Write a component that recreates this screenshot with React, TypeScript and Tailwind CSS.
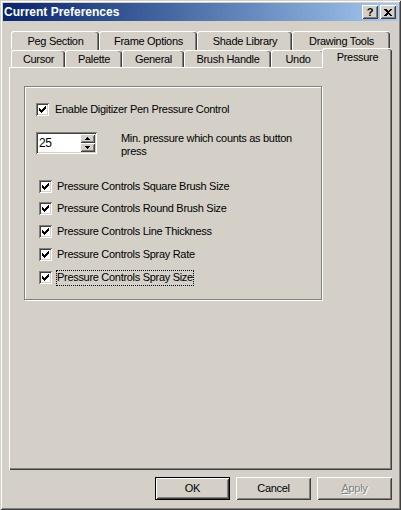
import React from "react";

const face = "bg-[#d4d0c8]";
const raised =
  "shadow-[inset_1px_1px_0_#fff,inset_-1px_-1px_0_#404040,inset_2px_2px_0_#d4d0c8,inset_-2px_-2px_0_#808080]";
const sunken =
  "shadow-[inset_1px_1px_0_#808080,inset_-1px_-1px_0_#fff,inset_2px_2px_0_#404040,inset_-2px_-2px_0_#d4d0c8]";

const checkPixels = [
  [6, 0],
  [5, 1], [6, 1],
  [0, 2], [4, 2], [5, 2], [6, 2],
  [0, 3], [1, 3], [3, 3], [4, 3], [5, 3],
  [0, 4], [1, 4], [2, 4], [3, 4], [4, 4],
  [1, 5], [2, 5], [3, 5],
  [2, 6],
];

const CheckBox = () => (
  <div className={`relative h-[13px] w-[13px] shrink-0 bg-white ${sunken}`}>
    <svg className="absolute left-[3px] top-[3px]" width="7" height="7" viewBox="0 0 7 7" shapeRendering="crispEdges">
      {checkPixels.map(([x, y]) => (
        <rect key={`${x}-${y}`} x={x} y={y} width="1" height="1" fill="#000" />
      ))}
    </svg>
  </div>
);

const Arrow = ({ up }: { up: boolean }) => (
  <svg width="5" height="3" viewBox="0 0 5 3" shapeRendering="crispEdges">
    {up ? (
      <>
        <rect x="2" y="0" width="1" height="1" fill="#000" />
        <rect x="1" y="1" width="3" height="1" fill="#000" />
        <rect x="0" y="2" width="5" height="1" fill="#000" />
      </>
    ) : (
      <>
        <rect x="0" y="0" width="5" height="1" fill="#000" />
        <rect x="1" y="1" width="3" height="1" fill="#000" />
        <rect x="2" y="2" width="1" height="1" fill="#000" />
      </>
    )}
  </svg>
);

const backTabs = [
  { label: "Peg Section", w: "w-[88px]" },
  { label: "Frame Options", w: "w-[98px]" },
  { label: "Shade Library", w: "w-[95px]" },
  { label: "Drawing Tools", w: "w-[98px]" },
];

const frontTabs = [
  { label: "Cursor", w: "w-[54px]" },
  { label: "Palette", w: "w-[57px]" },
  { label: "General", w: "w-[62px]" },
  { label: "Brush Handle", w: "w-[87px]" },
  { label: "Undo", w: "w-[53px]" },
];

const options = [
  "Pressure Controls Square Brush Size",
  "Pressure Controls Round Brush Size",
  "Pressure Controls Line Thickness",
  "Pressure Controls Spray Rate",
  "Pressure Controls Spray Size",
];
const rowGaps = ["mt-0", "mt-[9px]", "mt-[10px]", "mt-[10px]", "mt-[10px]"];

const tabBase =
  "flex items-center justify-center rounded-t-[3px] border-l border-t border-white shadow-[inset_-1px_0_0_#404040,inset_-2px_0_0_#808080]";

export default function App() {
  return (
    <div
      className={`flex h-[510px] w-[401px] flex-col ${face} p-[3px] text-[11px] tracking-[-0.3px] text-black shadow-[inset_1px_1px_0_#d4d0c8,inset_-1px_-1px_0_#404040,inset_2px_2px_0_#fff,inset_-2px_-2px_0_#808080]`}
      style={{ fontFamily: '"Liberation Sans", Arial, sans-serif' }}
    >
      {/* title bar */}
      <div className="flex h-[18px] items-center bg-linear-to-r from-[#0a246a] to-[#a6caf0] pl-[1px] pr-[2px]">
        <span className="text-[12px] font-bold tracking-normal text-white">Current Preferences</span>
        <div className="ml-auto flex gap-[2px]">
          <div className={`flex h-[14px] w-[16px] items-center justify-center ${face} ${raised} text-[11px] font-bold leading-none tracking-normal`}>
            ?
          </div>
          <div className={`flex h-[14px] w-[16px] items-center justify-center ${face} ${raised}`}>
            <svg width="8" height="7" viewBox="0 0 8 7" shapeRendering="crispEdges">
              <path d="M0 0h2l2 2 2-2h2L5 3.5 8 7H6L4 5 2 7H0l3-3.5z" fill="#000" />
            </svg>
          </div>
        </div>
      </div>

      <div className="mt-[10px] flex flex-col px-[6px]">
        {/* back row */}
        <div className="flex h-[19px] pl-[2px]">
          {backTabs.map((t) => (
            <div key={t.label} className={`${tabBase} ${t.w} h-[19px]`}>
              {t.label}
            </div>
          ))}
        </div>
        {/* front row */}
        <div className="flex h-[17px] items-start pl-[2px]">
          {frontTabs.map((t) => (
            <div key={t.label} className={`${tabBase} ${t.w} h-[17px]`}>
              {t.label}
            </div>
          ))}
          <div className={`relative z-10 -ml-[2px] -mt-[2px] h-[20px] w-[70px] ${face} ${tabBase} pb-[2px]`}>
            Pressure
          </div>
        </div>

        {/* page */}
        <div className="h-[403px] pl-[15px] pt-[19px] shadow-[inset_1px_1px_0_#fff,inset_-1px_-1px_0_#404040,inset_-2px_-2px_0_#808080]">
          <div className="h-[214px] w-[298px] border border-[#808080] pl-[11px] pt-[16px] shadow-[inset_1px_1px_0_#fff,1px_1px_0_#fff]">
            <div className="flex h-[13px] items-center gap-[6px]">
              <CheckBox />
              <span>Enable Digitizer Pen Pressure Control</span>
            </div>

            <div className="mt-[16px] flex h-[26px] items-start">
              <div className={`flex h-[22px] w-[61px] items-center bg-white p-[2px] ${sunken}`}>
                <span className="flex-1 pl-[1px] text-[12px]">25</span>
                <div className="flex h-[18px] w-[15px] flex-col">
                  <div className={`flex h-[9px] items-center justify-center ${face} ${raised}`}>
                    <Arrow up />
                  </div>
                  <div className={`flex h-[9px] items-center justify-center ${face} ${raised}`}>
                    <Arrow up={false} />
                  </div>
                </div>
              </div>
              <p className="ml-[24px] w-[185px] leading-[13px]">
                Min. pressure which counts as button press
              </p>
            </div>

            <div className="mt-[22px] flex flex-col pl-[3px]">
              {options.map((o, i) => (
                <div key={o} className={`flex h-[13px] items-center gap-[4px] ${rowGaps[i]}`}>
                  <CheckBox />
                  <span
                    className={`flex h-[16px] items-center border ${
                      i === options.length - 1 ? "border-dotted border-black" : "border-transparent"
                    }`}
                  >
                    {o}
                  </span>
                </div>
              ))}
            </div>
          </div>
        </div>

        {/* buttons */}
        <div className="mt-[7px] flex justify-end gap-[6px]">
          <div className={`flex h-[23px] w-[75px] items-center justify-center border border-black ${face} ${raised}`}>
            OK
          </div>
          <div className={`flex h-[23px] w-[75px] items-center justify-center ${face} ${raised}`}>
            Cancel
          </div>
          <div className={`flex h-[23px] w-[75px] items-center justify-center ${face} ${raised} text-[#808080] [text-shadow:1px_1px_0_#fff]`}>
            <span>
              <span className="underline">A</span>pply
            </span>
          </div>
        </div>
      </div>
    </div>
  );
}
